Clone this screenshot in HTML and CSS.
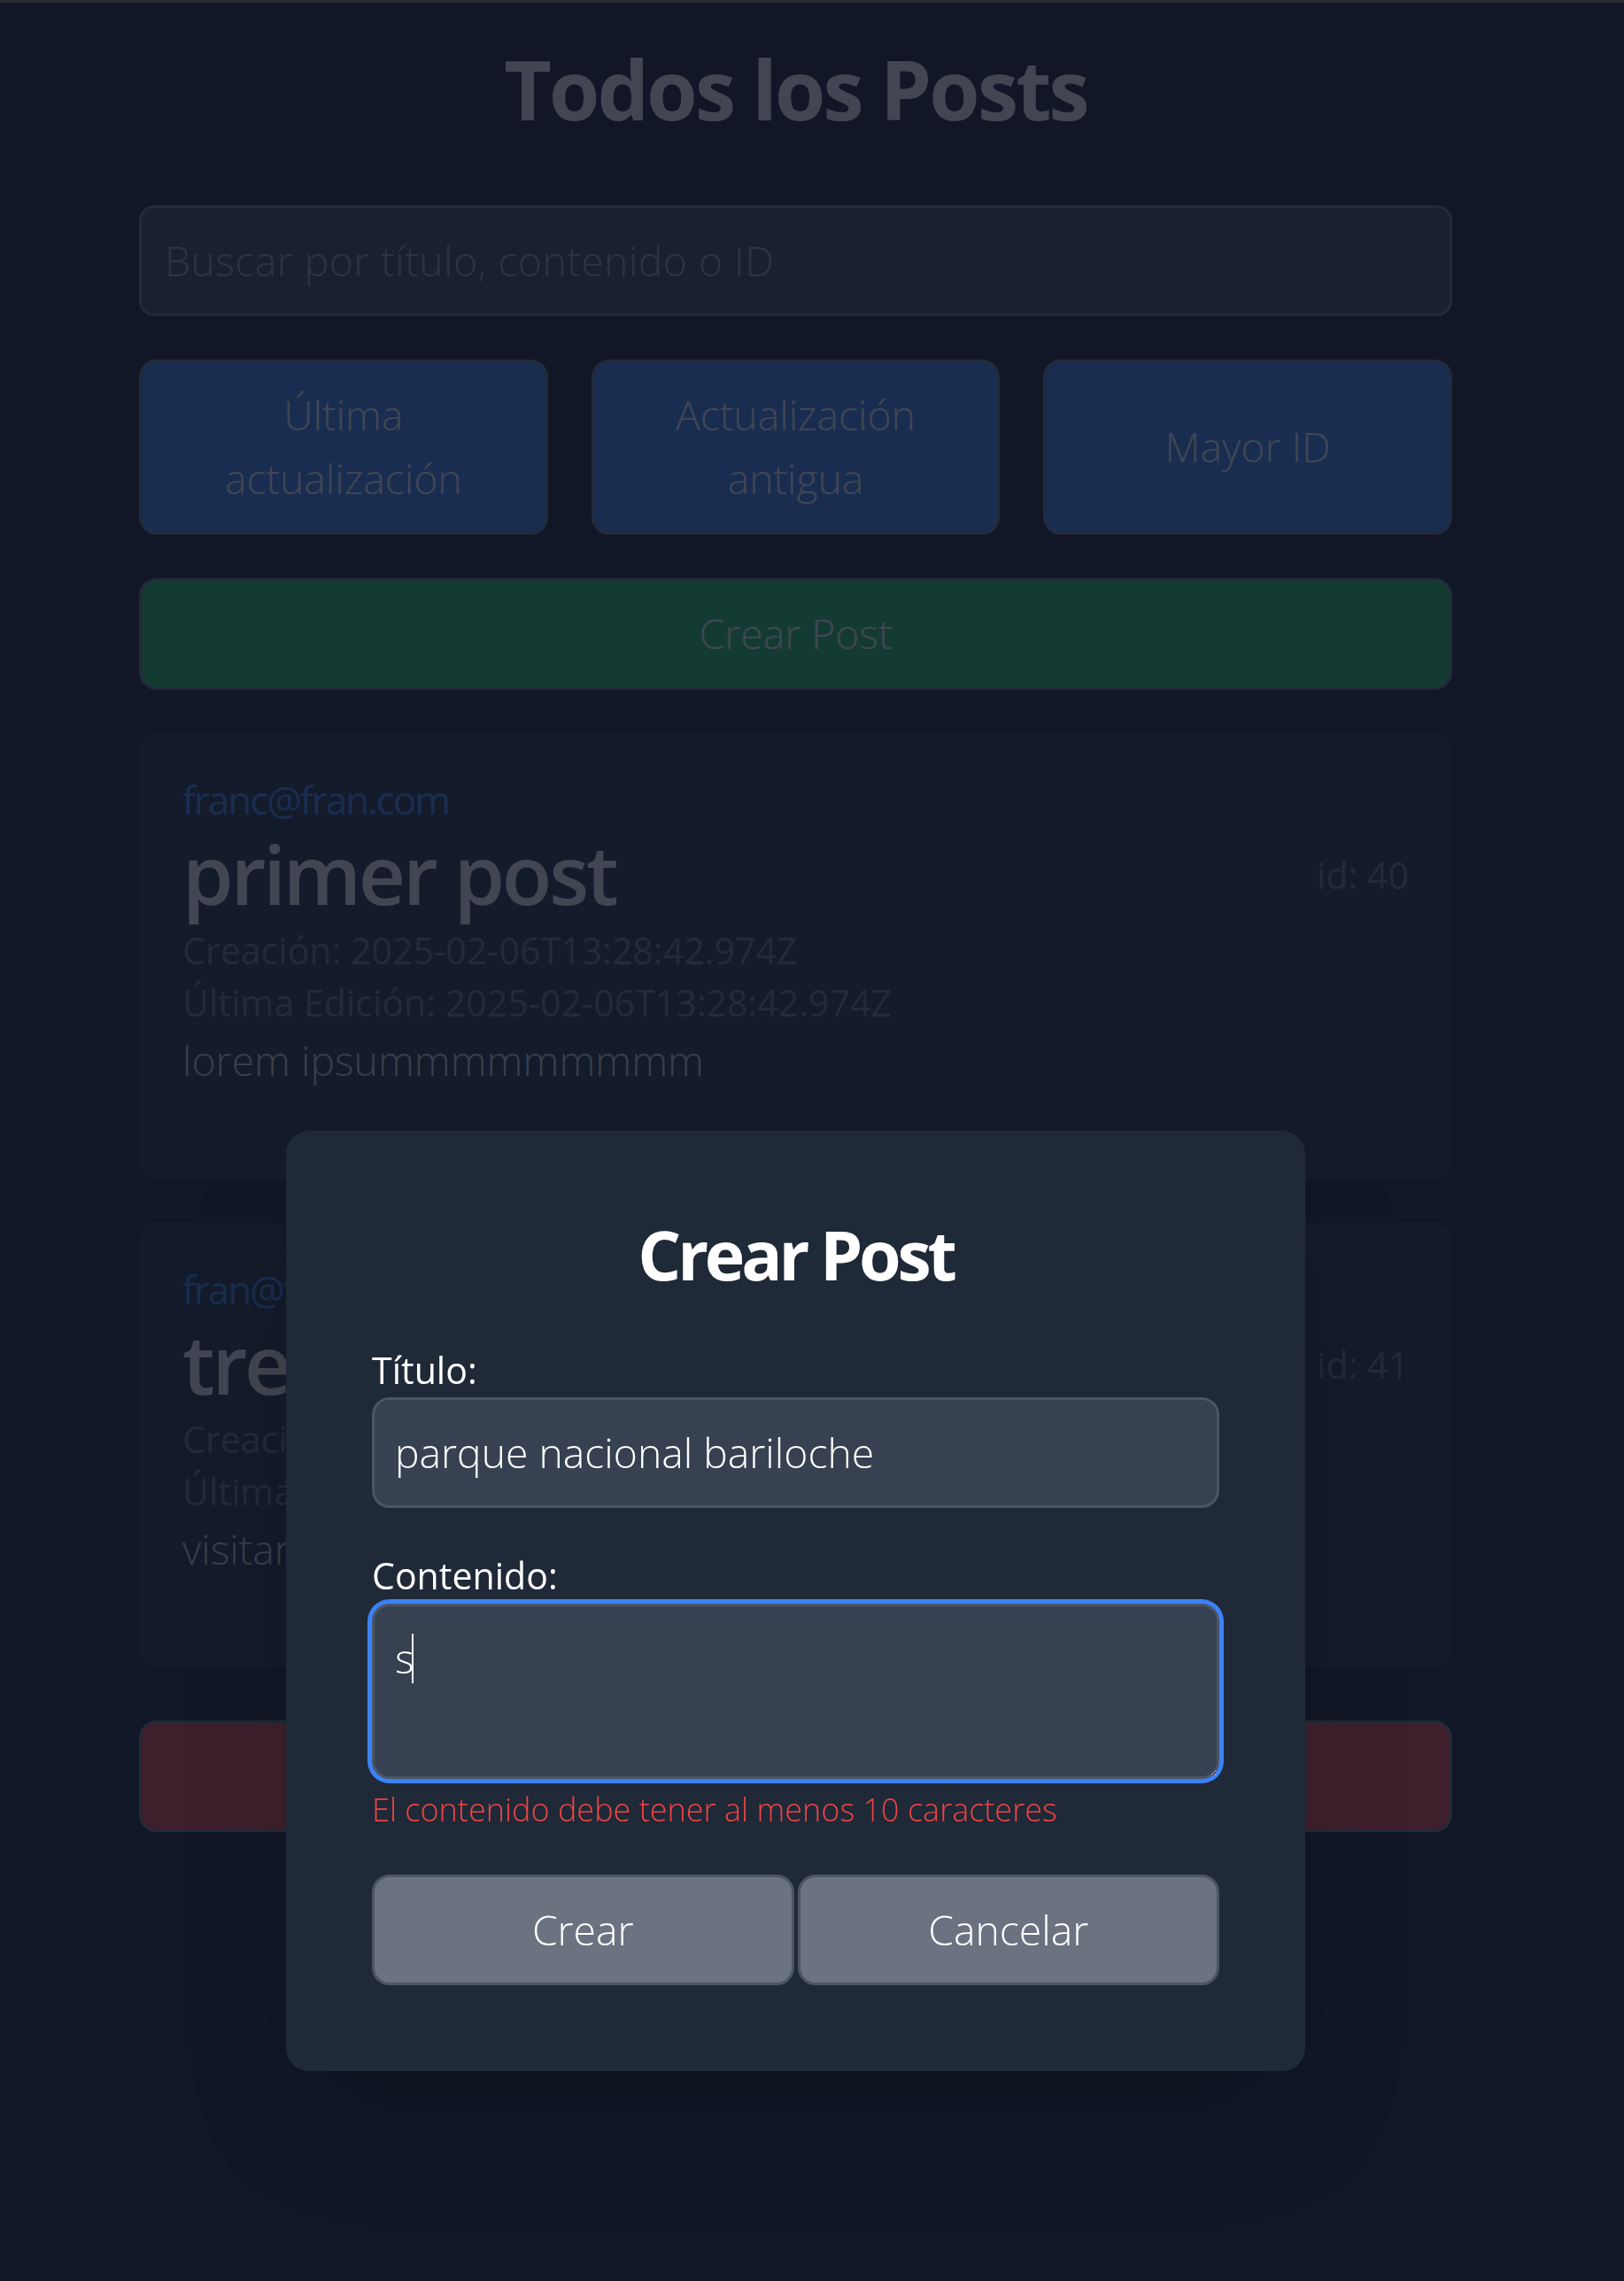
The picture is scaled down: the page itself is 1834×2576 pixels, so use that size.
FILE: index.html
```html
<!DOCTYPE html>
<html lang="es">
<head>
<meta charset="utf-8">
<title>Todos los Posts</title>
<link rel="stylesheet" href="styles.css">
</head>
<body>
<div class="topline"></div>
<main class="page">
  <h1 class="page-title">Todos los Posts</h1>
  <input class="search" type="text" placeholder="Buscar por título, contenido o ID">
  <div class="sort-row">
    <button class="btn btn-blue">Última actualización</button>
    <button class="btn btn-blue">Actualización antigua</button>
    <button class="btn btn-blue">Mayor ID</button>
  </div>
  <button class="btn btn-green btn-wide">Crear Post</button>

  <article class="card">
    <div class="card-email">franc@fran.com</div>
    <div class="card-head">
      <h2 class="card-title">primer post</h2>
      <span class="card-id">id: 40</span>
    </div>
    <p class="card-date">Creación: 2025-02-06T13:28:42.974Z</p>
    <p class="card-date">Última Edición: 2025-02-06T13:28:42.974Z</p>
    <p class="card-body">lorem ipsummmmmmmmm</p>
  </article>

  <article class="card">
    <div class="card-email">fran@fran.com</div>
    <div class="card-head">
      <h2 class="card-title">tres</h2>
      <span class="card-id">id: 41</span>
    </div>
    <p class="card-date">Creación: 2025-02-06T13:30:11.512Z</p>
    <p class="card-date">Última Edición: 2025-02-06T13:30:11.512Z</p>
    <p class="card-body">visitar bariloche</p>
  </article>

  <button class="btn btn-red btn-wide btn-logout">Cerrar Sesión</button>
</main>

<div class="overlay">
  <div class="modal">
    <h2 class="modal-title">Crear Post</h2>
    <div class="field">
      <label class="field-label" for="titulo">Título:</label>
      <input class="field-input" id="titulo" type="text" value="parque nacional bariloche">
    </div>
    <div class="field">
      <label class="field-label" for="contenido">Contenido:</label>
      <div class="ta-wrap">
        <textarea class="field-input field-textarea is-focused" id="contenido">s</textarea>
        <span class="caret"></span>
      </div>
      <p class="field-error">El contenido debe tener al menos 10 caracteres</p>
    </div>
    <div class="actions">
      <button class="btn btn-gray">Crear</button>
      <button class="btn btn-gray">Cancelar</button>
    </div>
  </div>
</div>
</body>
</html>
```

FILE: styles.css
```css
* { box-sizing: border-box; }

html, body { margin: 0; }

body {
  background: #111827;
  color: #ffffff;
  font-family: "Open Sans", "Noto Sans", sans-serif;
  font-weight: 300;
  min-height: 2576px;
  padding-right: 37px;
}

.topline {
  height: 3px;
  margin-right: -37px;
  background: #2c2e33;
  position: relative;
  z-index: 30;
}

.page {
  width: 1483px;
  margin: 0 auto;
  padding-top: 46px;
}

.page-title {
  margin: 0 0 80px;
  font-size: 92.6px;
  line-height: 102.8px;
  font-weight: 700;
  letter-spacing: -0.03em;
  text-align: center;
}

.search {
  display: block;
  width: 100%;
  height: 125px;
  margin: 0 0 49px;
  padding: 0 26px;
  border: 3px solid #6b7280;
  border-radius: 17px;
  background: #374151;
  color: #ffffff;
  font-family: inherit;
  font-weight: 300;
  font-size: 46.3px;
  letter-spacing: 0.01em;
  outline: none;
}

.search::placeholder { color: #9ca3af; }

.sort-row {
  display: grid;
  grid-template-columns: repeat(3, 1fr);
  gap: 49px;
  margin-bottom: 49px;
}

.btn {
  font-family: inherit;
  font-weight: 300;
  font-size: 46.3px;
  line-height: 72px;
  color: #ffffff;
  padding: 24px;
  border: 3px solid #6b7280;
  border-radius: 20px;
  text-align: center;
  cursor: pointer;
}

.btn-blue { background: #3b82f6; }
.btn-green { background: #22c55e; }
.btn-red { background: #ef4444; }

.btn-wide {
  display: block;
  width: 100%;
  margin-bottom: 49px;
}

.btn-logout { margin-top: 60px; }

.card {
  background: #1f2937;
  border-radius: 20px;
  padding: 43px 49px 97px;
  margin-bottom: 50px;
}

.card-email {
  color: #3b82f6;
  font-weight: 500;
  font-size: 44px;
  line-height: 64px;
  letter-spacing: -0.045em;
}

.card-head {
  display: flex;
  justify-content: space-between;
  align-items: center;
  margin-bottom: 6px;
}

.card-title {
  margin: 0;
  font-size: 92.6px;
  line-height: 102.8px;
  font-weight: 600;
  letter-spacing: -0.035em;
}

.card-id {
  margin-top: 6px;
  color: #6b7280;
  font-size: 41.1px;
  line-height: 61.7px;
  font-weight: 400;
}

.card-date {
  margin: 0;
  color: #6b7280;
  font-size: 41.1px;
  line-height: 59px;
  font-weight: 400;
}

.card-body {
  margin: 0;
  color: #d1d5db;
  font-size: 46.3px;
  line-height: 72px;
}

.overlay {
  position: fixed;
  top: 3px;
  left: 0;
  right: 0;
  bottom: 0;
  background: rgba(17, 24, 39, 0.8);
  display: flex;
  justify-content: center;
  align-items: flex-start;
  padding: 1274px 37px 0 0;
  z-index: 10;
}

.modal {
  width: 1151px;
  background: #1f2937;
  border-radius: 26px;
  padding: 94px 97px 97px;
  box-shadow: 0 64px 128px -31px rgba(0, 0, 0, 0.25);
}

.modal-title {
  margin: 0 0 53px;
  text-align: center;
  font-size: 77px;
  line-height: 92.6px;
  font-weight: 700;
  letter-spacing: -0.055em;
}

.field + .field { margin-top: 46px; }

.field-label {
  display: block;
  font-size: 41.1px;
  line-height: 61.7px;
  font-weight: 400;
}

.field-input {
  display: block;
  width: 100%;
  height: 125px;
  padding: 0 23px;
  background: #374151;
  border: 3px solid #4b5563;
  border-radius: 20px;
  color: #ffffff;
  font-family: inherit;
  font-weight: 300;
  font-size: 46.3px;
  outline: none;
}

.ta-wrap { position: relative; }

.field-textarea {
  height: 198px;
  padding: 23px;
  line-height: 72px;
  resize: vertical;
}

.field-textarea.is-focused {
  box-shadow: 0 0 0 5px #3b82f6;
}

.caret {
  position: absolute;
  left: 45px;
  top: 34px;
  width: 2px;
  height: 56px;
  background: #ffffff;
}

.field-error {
  margin: 9px 0 0;
  color: #ef4444;
  font-size: 36px;
  line-height: 51.4px;
  font-weight: 300;
}

.actions {
  display: flex;
  gap: 4px;
  margin-top: 48px;
}

.btn-gray {
  flex: 1;
  background: #6b7280;
  border-color: #4b5563;
  padding: 23.5px;
}
```
